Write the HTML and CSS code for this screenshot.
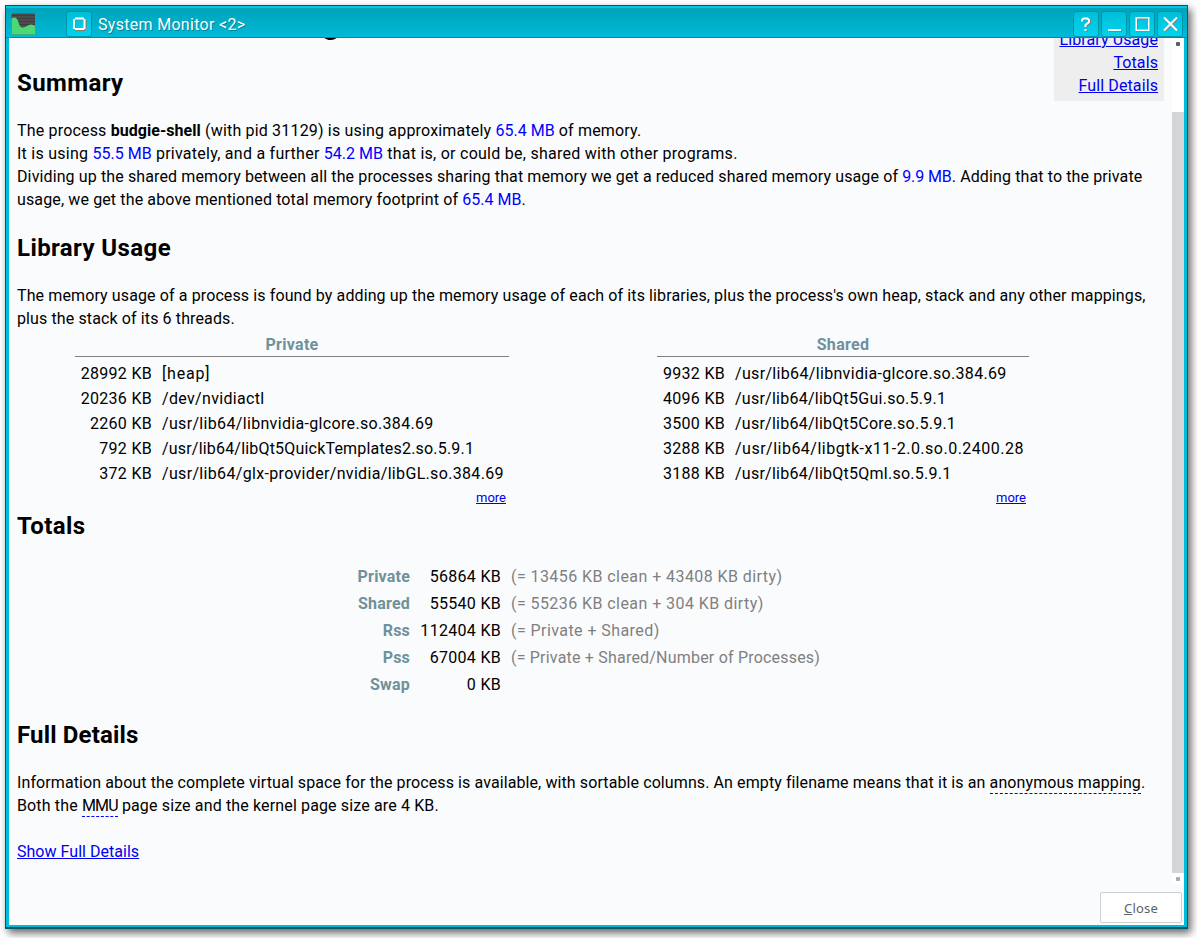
FILE: index.html
```html
<!DOCTYPE html>
<html lang="en">
<head>
<meta charset="utf-8">
<title>System Monitor</title>
<link rel="stylesheet" href="styles.css">
</head>
<body>
<div class="window">
  <header class="titlebar">
    <svg class="app-icon" width="24" height="22" viewBox="0 0 24 22"><rect x="0.500" y="0.500" width="23.500" height="21" rx="1" fill="#4d4d4d"/><path d="M1 2.500h23M1 5.500h23M1 8.500h23M1 11.500h23" stroke="#3d3d3d"/><path d="M0.500 6C2 4 5.500 3.500 7 8C8.500 13 9.500 14.500 12 14.500C15 14.500 17 11.500 20 11.500L24 12.500V21.500H0.500Z" fill="#4bd975"/></svg>
    <span class="tb-button pin"><svg width="26" height="26" viewBox="0 0 26 26"><path d="M9 9V18M20 9V18M9.500 8.500H19M9.500 19.500H19" stroke="#857e79" stroke-width="1.500" fill="none"/><path d="M8 8V18M18.500 8V18M9 7.500H18M9 18H18" stroke="#fff" stroke-width="2" fill="none"/></svg></span>
    <span class="title">System Monitor &lt;2&gt;</span>
    <div class="controls">
      <span class="tb-button"><svg width="26" height="26" viewBox="0 0 26 26"><g fill="none" stroke-width="2"><path d="M9.500 11V9.500L11 8H15L17 10V12L13.500 15V17M13.500 19V21" stroke="#857e79"/><path d="M9 10.500V9L10.500 7.500H14.500L16 9V11L12.500 14V16M12.500 18V20" stroke="#fff"/></g></svg></span>
      <span class="tb-button"><svg width="26" height="26" viewBox="0 0 26 26"><path d="M8 20H21" stroke="#857e79" stroke-width="2"/><path d="M7 19H20" stroke="#fff" stroke-width="2"/></svg></span>
      <span class="tb-button"><svg width="26" height="26" viewBox="0 0 26 26"><g fill="none"><rect x="8" y="7.500" width="12" height="12" stroke="#857e79" stroke-width="2"/><rect x="7.250" y="6.750" width="12.500" height="12.500" stroke="#fff" stroke-width="1.500"/></g></svg></span>
      <span class="tb-button"><svg width="26" height="26" viewBox="0 0 26 26"><g fill="none" stroke-width="2"><path d="M8 7.500L20.500 20M20.500 7.500L8 20" stroke="#857e79"/><path d="M7 6.500L20 19.500M20 6.500L7 19.500" stroke="#fff"/></g></svg></span>
    </div>
  </header>
  <div class="client">
    <div class="view">
      <main class="page">
        <h1>Process 31129 - budgie-shell</h1>
        <h2 class="h-summary">Summary</h2>
        <p><span class="s1">The process <b>budgie-shell</b> (with pid 31129) is using approximately <i>65.4 MB</i> of memory.</span><br>
        <span class="s2">It is using <i>55.5 MB</i> privately, and a further <i>54.2 MB</i> that is, or could be, shared with other programs.</span><br>
        <span class="s3">Dividing up the shared memory between all the processes sharing that memory we get a reduced shared memory usage of <i>9.9 MB</i>. Adding that to the private</span><br>
        <span class="s4">usage, we get the above mentioned total memory footprint of <i>65.4 MB</i>.</span></p>
        <h2 class="h-library">Library Usage</h2>
        <p class="s5">The memory usage of a process is found by adding up the memory usage of each of its libraries, plus the process's own heap, stack and any other mappings,<br>
        plus the stack of its 6 threads.</p>
        <div class="libraries">
          <section class="lib private">
            <h3>Private</h3>
            <dl>
              <dt>28992 KB</dt><dd class="heap">[heap]</dd>
              <dt>20236 KB</dt><dd>/dev/nvidiactl</dd>
              <dt>2260 KB</dt><dd>/usr/lib64/libnvidia-glcore.so.384.69</dd>
              <dt>792 KB</dt><dd class="tight">/usr/lib64/libQt5QuickTemplates2.so.5.9.1</dd>
              <dt>372 KB</dt><dd>/usr/lib64/glx-provider/nvidia/libGL.so.384.69</dd>
            </dl>
            <div class="more"><a>more</a></div>
          </section>
          <section class="lib shared">
            <h3>Shared</h3>
            <dl>
              <dt>9932 KB</dt><dd>/usr/lib64/libnvidia-glcore.so.384.69</dd>
              <dt>4096 KB</dt><dd class="qt">/usr/lib64/libQt5Gui.so.5.9.1</dd>
              <dt>3500 KB</dt><dd class="qt">/usr/lib64/libQt5Core.so.5.9.1</dd>
              <dt>3288 KB</dt><dd class="loose">/usr/lib64/libgtk-x11-2.0.so.0.2400.28</dd>
              <dt>3188 KB</dt><dd class="qt">/usr/lib64/libQt5Qml.so.5.9.1</dd>
            </dl>
            <div class="more"><a>more</a></div>
          </section>
        </div>
        <h2 class="h-totals">Totals</h2>
        <div class="totals">
          <b>Private</b><span>56864 KB</span><em>(= 13456 KB clean + 43408 KB dirty)</em>
          <b>Shared</b><span>55540 KB</span><em>(= 55236 KB clean + 304 KB dirty)</em>
          <b>Rss</b><span>112404 KB</span><em>(= Private + Shared)</em>
          <b>Pss</b><span>67004 KB</span><em class="tight">(= Private + Shared/Number of Processes)</em>
          <b>Swap</b><span>0 KB</span><em></em>
        </div>
        <h2 class="h-details">Full Details</h2>
        <p class="s7">Information about the complete virtual space for the process is available, with sortable columns. An empty filename means that it is an <abbr>anonymous mapping</abbr>.<br>
        <span class="s8">Both the <abbr class="mmu">MMU</abbr> page size and the kernel page size are 4 KB.</span></p>
        <p class="show"><a>Show Full Details</a></p>
      </main>
      <nav class="toc"><a>Library Usage</a><a>Totals</a><a>Full Details</a></nav>
      <div class="scrollbar"><div class="cap top"></div><div class="thumb"></div><div class="cap bottom"></div></div>
    </div>
    <footer><button class="close"><u>C</u>lose</button></footer>
  </div>
</div>
</body>
</html>
```
FILE: styles.css
```css
* { box-sizing: border-box; }
body {
  margin: 0;
  padding: 5px;
  height: 938px;
  overflow: hidden;
  background: #fff;
  color: #000;
  font: 16px/23px Roboto, "Noto Sans", sans-serif;
  letter-spacing: 0.3px;
  white-space: nowrap;
}
.window {
  display: flex;
  flex-direction: column;
  width: 1183px;
  height: 924px;
  padding: 0 3px 2px 3px;
  border: 1px solid #00596b;
  border-bottom-width: 2px;
  background: #00bcd8;
  box-shadow: 3px 4px 8px rgba(0, 0, 0, 0.6);
}
.titlebar {
  display: flex;
  flex: 0 0 32px;
  align-items: center;
  margin: 0 -3px;
  padding: 2px 4px 0 5px;
  border-top: 2px solid #00c8e4;
  border-bottom: 1px solid #008ba0;
  background: linear-gradient(#00a3ba, #00bad7);
}
.app-icon { flex: none; margin: 0 31px 0 0; }
.tb-button {
  flex: none;
  width: 26px;
  height: 26px;
  border-radius: 3px;
  background: linear-gradient(#00bdd8, #00d5ef);
  box-shadow: inset 0 0 0 1px #0094aa;
}
.tb-button svg { display: block; }
.title { margin-left: 6px; padding-top: 2px; color: #fff; text-shadow: 1px 1px 0 #00829a; }
.controls { display: flex; gap: 2px; margin-left: auto; }
.client { display: flex; flex: 1; flex-direction: column; min-height: 0; background: #fafbfd; }
.view { position: relative; display: flex; flex: 0 0 846px; overflow: hidden; }
.page { flex: 1; min-width: 0; padding-left: 8px; }
h1, h2, h3, p, dl, dd { margin: 0; }
h1 { height: 8px; font-size: 32px; line-height: 8px; margin-top: -19px; }
h2 { margin: 19px 0; padding-top: 1px; height: 35px; font-size: 24px; line-height: 35px; letter-spacing: 0.4px; }
.h-summary { margin-top: 38px; }
.h-details { letter-spacing: 0.15px; }
i { color: #00f; font-style: normal; letter-spacing: 0; }
a { color: #00e; text-decoration: underline; }
.s1 { letter-spacing: 0.18px; }
.s1 b { letter-spacing: 0.05px; }
.s2 { letter-spacing: 0.26px; }
.s3 { letter-spacing: 0.12px; }
.s3 i { letter-spacing: -0.1px; }
.s4 { letter-spacing: 0.13px; }
.s5 { letter-spacing: 0.115px; }
.s7 { letter-spacing: 0.097px; }
.s8 { letter-spacing: 0.14px; }
.mmu { letter-spacing: -0.8px; }
.libraries { display: flex; align-items: flex-start; padding-left: 58px; gap: 148px; }
.lib { display: flex; flex-direction: column; }
.private { width: 434px; }
.shared { width: 372px; }
h3 {
  height: 27px;
  padding-top: 3px;
  border-bottom: 1px solid #808080;
  color: #6e919b;
  font-size: 16px;
  line-height: 23px;
  text-align: center;
}
dl { display: grid; grid-template-columns: 77px auto; column-gap: 10px; padding-top: 4px; line-height: 25px; }
.shared dl { grid-template-columns: 68px auto; }
dt { text-align: right; }
dd { letter-spacing: 0.33px; }
.heap { letter-spacing: 0.8px; }
.tight { letter-spacing: 0.19px; }
.qt { letter-spacing: 0.25px; }
.loose { letter-spacing: 0.49px; }
.more { padding: 1px 3px 0 0; height: 22px; font-size: 13px; line-height: 22px; letter-spacing: 0; text-align: right; }
.h-totals { margin: 0 0 20px; }
.totals { display: grid; grid-template-columns: 393px 81px auto; column-gap: 10px; line-height: 27px; }
.totals b { color: #6e919b; letter-spacing: 0.2px; text-align: right; }
.totals span { text-align: right; }
.totals em { color: #808080; font-style: normal; letter-spacing: 0.43px; }
.totals em.tight { letter-spacing: 0.2px; }
abbr { padding-bottom: 1px; border-bottom: 1px dashed #00f; }
.show { margin-top: 23px; letter-spacing: 0.03px; }
.toc {
  position: absolute;
  top: -10px;
  right: 20px;
  width: 110px;
  padding-right: 6px;
  height: 73px;
  background: #eee;
  letter-spacing: 0.1px;
  text-align: right;
}
.toc a { display: block; }
.scrollbar { display: flex; flex: 0 0 12px; flex-direction: column; background: #fff; }
.thumb { height: 761px; background: #d2d6d7; }
.cap { display: flex; align-items: center; justify-content: center; }
.cap::after { content: ""; width: 4px; height: 4px; border-radius: 1px; background: #555d63; }
.cap.top { height: 74px; align-items: flex-start; padding-top: 4px; }
.cap.bottom { height: 11px; }
.cap.bottom::after { background: #a6abae; }
footer { display: flex; justify-content: flex-end; padding: 8px 2px 0 0; }
.close {
  width: 82px;
  height: 31px;
  padding: 0;
  border: 1px solid #ccd0d2;
  border-radius: 2px;
  background: #fff;
  color: #5c6268;
  font: 13px/28px "Noto Sans", sans-serif;
  letter-spacing: 0.2px;
}
```
